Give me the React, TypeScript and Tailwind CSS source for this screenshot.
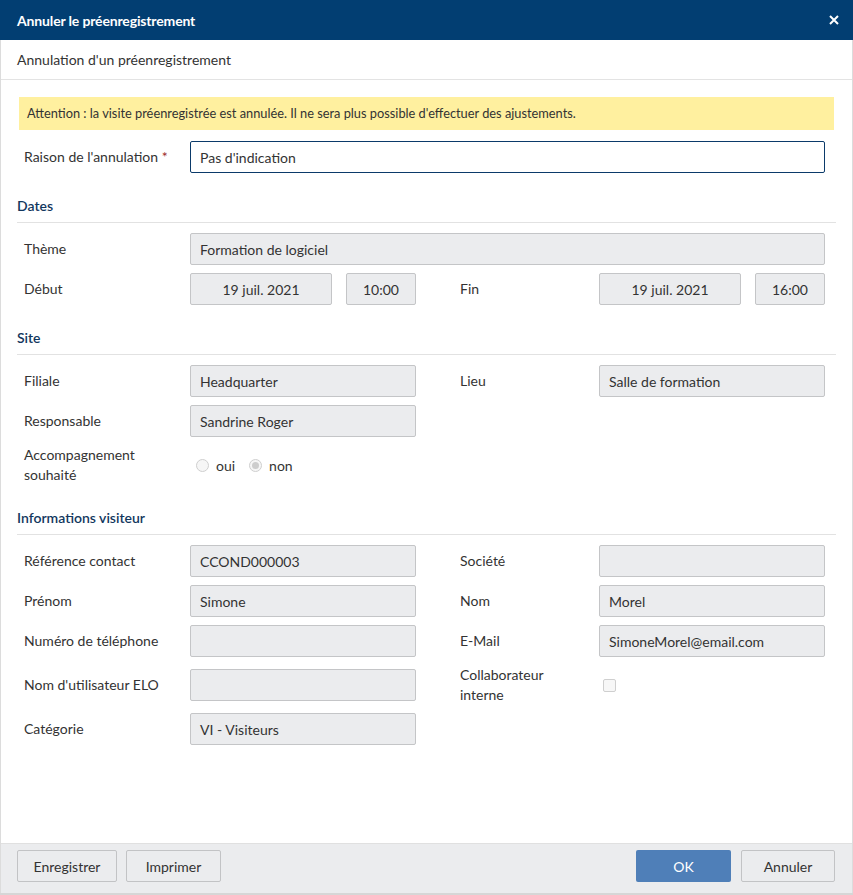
import React from "react";

const Field = ({ value, center = false, className = "" }: { value?: string; center?: boolean; className?: string }) => (
  <div
    className={`h-[32px] bg-[#ebecee] border border-[#c4c5c7] rounded-[2px] flex items-center text-[#333] ${center ? "justify-center" : "px-[9px]"} ${className}`}
  >
    {value}
  </div>
);

const Label = ({ children, className = "" }: { children: React.ReactNode; className?: string }) => (
  <div className={`pl-[7px] text-[#333] leading-[20px] ${className}`}>{children}</div>
);

const Section = ({ title, children }: { title: string; children: React.ReactNode }) => (
  <div className="mt-[23px]">
    <div className="h-[27px] border-b border-[#e2e2e2] font-semibold text-[#12375e] leading-[20px]">{title}</div>
    <div className="pt-[10px] grid grid-cols-[173px_226px_37px_146px_226px] gap-y-[8px] items-center">{children}</div>
  </div>
);

const Radio = ({ checked }: { checked?: boolean }) => (
  <span className="w-[13px] h-[13px] rounded-full border border-[#cfcfcf] bg-[#f6f6f6] flex items-center justify-center">
    {checked && <span className="w-[7px] h-[7px] rounded-full bg-[#cdcdcd]" />}
  </span>
);

export default function App() {
  return (
    <div className="w-[853px] h-[895px] flex flex-col bg-white font-['Lato',sans-serif] text-[14px] text-[#333]">
      <div className="h-[40px] shrink-0 bg-[#023e72] flex items-center justify-between pl-[17px] pr-[14px]">
        <span className="text-white font-bold tracking-[-0.15px]">Annuler le préenregistrement</span>
        <svg width="10" height="10" viewBox="0 0 10 10">
          <path d="M1 1 L9 9 M9 1 L1 9" stroke="white" strokeWidth="2" />
        </svg>
      </div>
      <div className="flex-1 flex flex-col border-x border-[#dcdcdc]">
        <div className="h-[40px] shrink-0 border-b border-[#e3e3e3] flex items-center px-[16px]">
          Annulation d'un préenregistrement
        </div>
        <div className="flex-1 px-[16px] pt-[17px]">
          <div className="mx-[2px] h-[33px] bg-[#fff09f] flex items-center px-[8px] text-[12.8px]">
            Attention : la visite préenregistrée est annulée. Il ne sera plus possible d'effectuer des ajustements.
          </div>
          <div className="mt-[11px] grid grid-cols-[173px_1fr] items-center pr-[11px]">
            <Label>
              Raison de l'annulation <span className="text-[#9b2b2b]">*</span>
            </Label>
            <div className="h-[32px] border border-[#0b3a6a] rounded-[2px] flex items-center px-[9px] bg-white">Pas d'indication</div>
          </div>

          <Section title="Dates">
            <Label>Thème</Label>
            <Field value="Formation de logiciel" className="col-span-4" />
            <Label>Début</Label>
            <div className="flex gap-[14px]">
              <Field value="19 juil. 2021" center className="w-[142px]" />
              <Field value="10:00" center className="w-[70px]" />
            </div>
            <div />
            <Label>Fin</Label>
            <div className="flex gap-[14px]">
              <Field value="19 juil. 2021" center className="w-[142px]" />
              <Field value="16:00" center className="w-[70px]" />
            </div>
          </Section>

          <Section title="Site">
            <Label>Filiale</Label>
            <Field value="Headquarter" />
            <div />
            <Label>Lieu</Label>
            <Field value="Salle de formation" />
            <Label>Responsable</Label>
            <Field value="Sandrine Roger" />
            <div className="col-span-3" />
            <Label>
              Accompagnement
              <br />
              souhaité
            </Label>
            <div className="flex items-center h-[40px] pl-[6px]">
              <Radio />
              <span className="ml-[7px]">oui</span>
              <span className="ml-[14px]"><Radio checked /></span>
              <span className="ml-[7px]">non</span>
            </div>
            <div className="col-span-3" />
          </Section>

          <Section title="Informations visiteur">
            <Label>Référence contact</Label>
            <Field value="CCOND000003" />
            <div />
            <Label>Société</Label>
            <Field />
            <Label>Prénom</Label>
            <Field value="Simone" />
            <div />
            <Label>Nom</Label>
            <Field value="Morel" />
            <Label>Numéro de téléphone</Label>
            <Field />
            <div />
            <Label>E-Mail</Label>
            <Field value="SimoneMorel@email.com" />
            <Label>Nom d'utilisateur ELO</Label>
            <Field />
            <div />
            <Label>
              Collaborateur
              <br />
              interne
            </Label>
            <div className="h-[40px] flex items-center pl-[4px]">
              <span className="w-[13px] h-[13px] rounded-[2px] border border-[#cfcfcf] bg-[#f7f7f7]" />
            </div>
            <Label>Catégorie</Label>
            <Field value="VI - Visiteurs" />
            <div className="col-span-3" />
          </Section>
        </div>
        <div className="h-[50px] shrink-0 bg-[#ebecee] border-t border-[#e0e0e0] flex items-start pt-[6px] pl-[16px] pr-[17px]">
          <button className="h-[32px] w-[100px] border border-[#c2c3c5] rounded-[2px] bg-[#ebecee] text-[#333]">Enregistrer</button>
          <button className="ml-[9px] h-[32px] w-[95px] border border-[#c2c3c5] rounded-[2px] bg-[#ebecee] text-[#333]">Imprimer</button>
          <div className="flex-1" />
          <button className="h-[32px] w-[95px] rounded-[2px] bg-[#4f7fb8] text-white">OK</button>
          <button className="ml-[10px] h-[32px] w-[94px] border border-[#c2c3c5] rounded-[2px] bg-[#ebecee] text-[#333]">Annuler</button>
        </div>
      </div>
      <div className="h-[2px] shrink-0 bg-[#d6d6d6]" />
    </div>
  );
}
